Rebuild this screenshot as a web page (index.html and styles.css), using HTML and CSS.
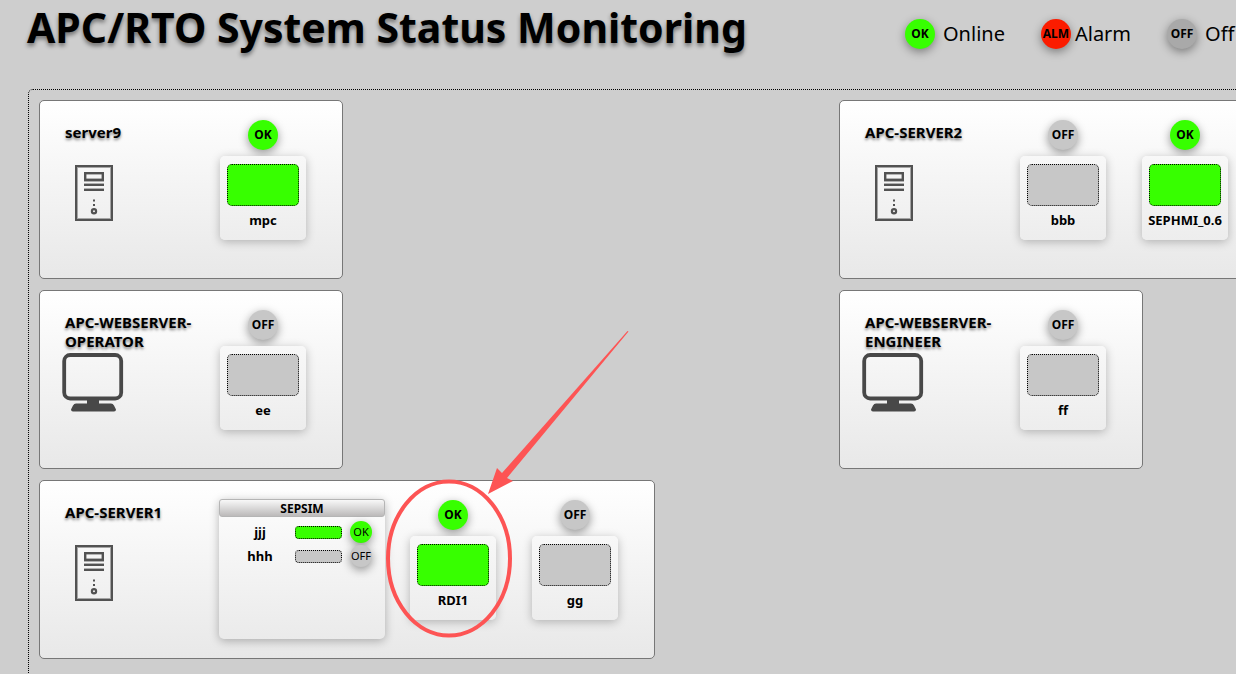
FILE: index.html
```html
<!DOCTYPE html>
<html lang="en">
<head>
<meta charset="utf-8">
<title>APC/RTO System Status Monitoring</title>
<link rel="stylesheet" href="styles.css">
</head>
<body>
<svg class="defs" aria-hidden="true">
  <symbol id="tower" viewBox="0 0 64 62">
    <rect x="14" y="4" width="36" height="54" fill="none" stroke="#525252" stroke-width="2"/>
    <rect x="15.5" y="5.5" width="33" height="51" fill="none" stroke="#a5a5a5" stroke-width="1"/>
    <rect x="23.2" y="11.2" width="17.600" height="6.600" fill="none" stroke="#525252" stroke-width="2.400"/>
    <path d="M22 19.500h20M22 21.500h20M22 26.500h20" stroke="#b0b0b0"/>
    <path d="M22 23h20M22 28h20" stroke="#525252" stroke-width="2"/>
    <path d="M31 37.500h2v2h-2zM31 42h2v2h-2z" fill="#525252"/>
    <circle cx="32" cy="49.300" r="2.100" fill="none" stroke="#525252" stroke-width="2.200"/>
  </symbol>
  <symbol id="monitor" viewBox="0 0 64 62">
    <rect x="2.200" y="3" width="57" height="43.500" rx="6" fill="none" stroke="#484848" stroke-width="3.800"/>
    <path d="M25 47h12v4.500h12q2 0 3 2l2 4q0 2-2 2H11q-2 0-2-2l2-4q1-2 3-2h11z" fill="#484848"/>
  </symbol>
</svg>

<header class="top">
  <h1 class="title">APC/RTO System Status Monitoring</h1>
  <ul class="legend">
    <li class="legend-item"><span class="badge ok">OK</span>Online</li>
    <li class="legend-item tight"><span class="badge alarm">ALM</span>Alarm</li>
    <li class="legend-item"><span class="badge dim">OFF</span>Off</li>
  </ul>
</header>

<main class="board">
  <section class="card">
    <div class="identity"><h2 class="name">server9</h2><svg class="device"><use href="#tower"/></svg></div>
    <div class="nodes">
      <div class="node"><span class="badge ok">OK</span><div class="tile"><div class="screen ok"></div><span class="label">mpc</span></div></div>
    </div>
  </section>

  <section class="card">
    <div class="identity"><h2 class="name">APC-SERVER2</h2><svg class="device"><use href="#tower"/></svg></div>
    <div class="nodes">
      <div class="node"><span class="badge off">OFF</span><div class="tile"><div class="screen off"></div><span class="label">bbb</span></div></div>
      <div class="node"><span class="badge ok">OK</span><div class="tile"><div class="screen ok"></div><span class="label">SEPHMI_0.6</span></div></div>
    </div>
  </section>

  <section class="card">
    <div class="identity"><h2 class="name">APC-WEBSERVER-OPERATOR</h2><svg class="device"><use href="#monitor"/></svg></div>
    <div class="nodes">
      <div class="node"><span class="badge off">OFF</span><div class="tile"><div class="screen off"></div><span class="label">ee</span></div></div>
    </div>
  </section>

  <section class="card">
    <div class="identity"><h2 class="name">APC-WEBSERVER-ENGINEER</h2><svg class="device"><use href="#monitor"/></svg></div>
    <div class="nodes">
      <div class="node"><span class="badge off">OFF</span><div class="tile"><div class="screen off"></div><span class="label">ff</span></div></div>
    </div>
  </section>

  <section class="card">
    <div class="identity"><h2 class="name">APC-SERVER1</h2><svg class="device"><use href="#tower"/></svg></div>
    <div class="group">
      <h3 class="group-title">SEPSIM</h3>
      <ul class="group-list">
        <li class="group-row"><span class="group-label">jjj</span><span class="bar ok"></span><span class="badge small ok">OK</span></li>
        <li class="group-row"><span class="group-label">hhh</span><span class="bar off"></span><span class="badge small off">OFF</span></li>
      </ul>
    </div>
    <div class="nodes">
      <div class="node"><span class="badge ok">OK</span><div class="tile"><div class="screen ok"></div><span class="label">RDI1</span></div></div>
      <div class="node"><span class="badge off">OFF</span><div class="tile"><div class="screen off"></div><span class="label">gg</span></div></div>
    </div>
  </section>
</main>

<svg class="callout" viewBox="0 0 260 320" aria-hidden="true">
  <ellipse cx="69" cy="238.500" rx="61" ry="77" fill="none" stroke="#fd5454" stroke-width="4"/>
  <path d="M108 174L117 148L122 153L247.500 11L248.500 11.500L127 158L133 161Z" fill="#fd5454"/>
</svg>
</body>
</html>
```

FILE: styles.css
```css
* {
  box-sizing: border-box;
}

body {
  margin: 0;
  min-height: 100vh;
  overflow: hidden;
  background: #cecece;
  color: #000;
  font-family: "Noto Sans", "Open Sans", sans-serif;
}

h1, h2, h3, ul {
  margin: 0;
  padding: 0;
}

ul {
  list-style: none;
}

.defs {
  position: absolute;
  width: 0;
  height: 0;
}

.top {
  display: flex;
  height: 89px;
  padding-left: 27px;
}

.title {
  flex: 0 0 878px;
  font-size: 41px;
  line-height: 54px;
  font-weight: 700;
  white-space: nowrap;
  text-shadow: 0 3px 4px rgba(0, 0, 0, .45);
}

.legend {
  display: flex;
  align-items: flex-start;
  gap: 36px;
  padding-top: 19px;
}

.legend-item {
  display: flex;
  align-items: center;
  gap: 8px;
  font-size: 20px;
  line-height: 30px;
  white-space: nowrap;
}

.legend-item.tight {
  gap: 4px;
}

.badge {
  display: flex;
  flex: none;
  align-items: center;
  justify-content: center;
  width: 30px;
  height: 30px;
  border-radius: 50%;
  font-size: 12px;
  line-height: 16px;
  font-weight: 700;
  box-shadow: 0 3px 10px rgba(0, 0, 0, .4);
}

.badge.small {
  width: 22px;
  height: 22px;
  font-size: 11px;
  font-weight: 400;
}

.ok {
  background: #37ff00;
}

.off {
  background: #c7c7c7;
}

.alarm {
  background: #fb1c00;
}

.dim {
  background: #a9a9a9;
}

.board {
  display: grid;
  grid-template-columns: 790px auto;
  grid-auto-rows: max-content;
  gap: 11px 10px;
  justify-items: start;
  min-width: 1600px;
  min-height: 100vh;
  margin-left: 28px;
  padding: 10px;
  border: 1px dotted #000;
  border-radius: 5px;
}

.card {
  display: flex;
  align-items: flex-start;
  min-height: 179px;
  padding: 0 36px 0 22px;
  border: 1px solid #777;
  border-radius: 5px;
  background: linear-gradient(#fff, #e8e8e8);
}

.identity {
  width: 158px;
  padding-top: 22px;
}

.name {
  min-height: 38px;
  margin-bottom: 1px;
  padding-left: 3px;
  font-size: 15px;
  line-height: 19px;
  font-weight: 700;
  text-shadow: 0 2px 3px rgba(0, 0, 0, .5);
}

.device {
  display: block;
  width: 64px;
  height: 62px;
}

.nodes {
  display: flex;
  gap: 36px;
  padding-top: 19px;
}

.node {
  display: flex;
  flex-direction: column;
  align-items: center;
  gap: 6px;
  width: 86px;
}

.tile {
  display: flex;
  flex-direction: column;
  align-items: center;
  gap: 5px;
  width: 100%;
  height: 84px;
  padding: 8px 6px;
  border-radius: 5px;
  background: linear-gradient(#f8f8f8, #ededed);
  box-shadow: 0 2px 10px rgba(0, 0, 0, .25);
}

.screen {
  width: 72px;
  height: 42px;
  border: 1px dotted #000;
  border-radius: 5px;
}

.label {
  font-size: 13px;
  line-height: 19px;
  font-weight: 700;
  white-space: nowrap;
}

.group {
  width: 166px;
  min-height: 140px;
  margin: 18px 25px 0 -1px;
  border-radius: 5px;
  box-shadow: 0 2px 10px rgba(0, 0, 0, .28);
}

.group-title {
  height: 18px;
  border: 1px solid #b5b5b5;
  border-radius: 3px;
  background: linear-gradient(#f8f8f8, #bcbaba);
  font-size: 12px;
  line-height: 17px;
  font-weight: 700;
  text-align: center;
}

.group-list {
  padding: 3px 13px 0 6px;
}

.group-row {
  display: flex;
  align-items: center;
  height: 24px;
}

.group-label {
  flex: 1;
  font-size: 13px;
  line-height: 20px;
  font-weight: 700;
  text-align: center;
}

.bar {
  width: 47px;
  height: 13px;
  margin-right: 8px;
  border: 1px dotted #000;
  border-radius: 4px;
}

.callout {
  position: absolute;
  top: 320px;
  left: 380px;
  width: 260px;
  height: 320px;
  pointer-events: none;
}
```
